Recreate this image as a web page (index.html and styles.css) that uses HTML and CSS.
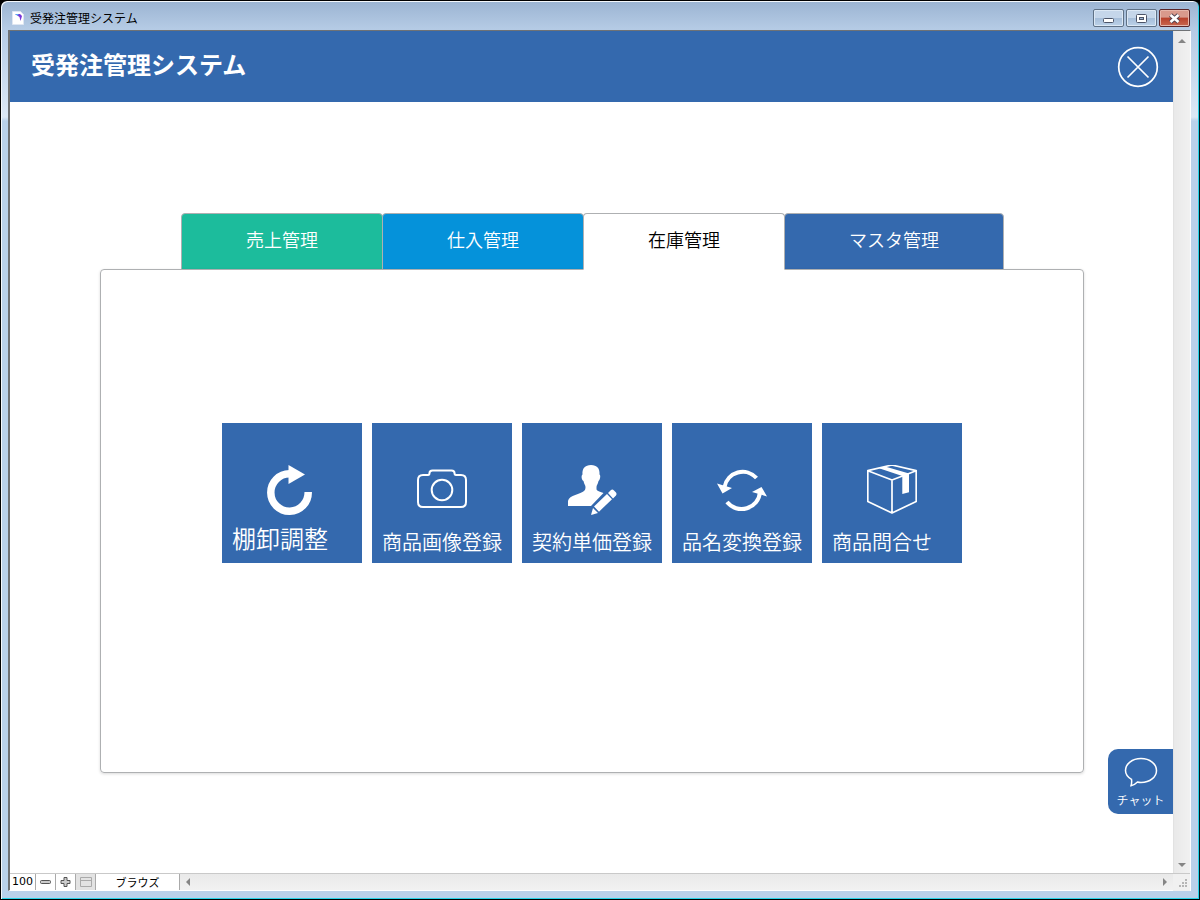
FILE: index.html
```html
<!DOCTYPE html>
<html lang="ja">
<head>
<meta charset="utf-8">
<meta name="viewport" content="width=device-width, initial-scale=1">
<title>受発注管理システム</title>
<link rel="stylesheet" href="styles.css">
</head>
<body>
<div class="window">
  <div class="titlebar">
    <svg class="doc-icon" width="12" height="14" viewBox="0 0 12 14" aria-hidden="true">
      <path d="M.5.5h8l3 3v10H.5z" fill="#fff" stroke="#dfe6f2"/>
      <path d="M3 3h5l2 2-1.500 5-1-4z" fill="#7a35d8"/>
      <path d="M3 3h3.500L6 5z" fill="#5ab0f0"/>
    </svg>
    <span class="window-title">受発注管理システム</span>
    <div class="window-buttons">
      <button class="win-btn" type="button" aria-label="最小化"><svg width="29" height="16" viewBox="0 0 29 16"><rect x="9.500" y="8.500" width="10" height="4" rx="1" fill="#fff" stroke="#4c5468"/></svg></button>
      <button class="win-btn" type="button" aria-label="最大化"><svg width="29" height="16" viewBox="0 0 29 16"><rect x="9.500" y="4.500" width="10" height="8" rx="1" fill="#fff" stroke="#4c5468"/><rect x="12.500" y="7.500" width="4" height="2" fill="#9db6d4" stroke="#4c5468"/></svg></button>
      <button class="win-btn win-btn-close" type="button" aria-label="閉じる"><svg width="29" height="16" viewBox="0 0 29 16"><path d="M10.500 5l8 7M18.500 5l-8 7" stroke="#4f4350" stroke-width="4.500"/><path d="M10.500 5l8 7M18.500 5l-8 7" stroke="#fff" stroke-width="2.700"/></svg></button>
    </div>
  </div>

  <div class="client">
    <div class="view">
      <div class="page">
        <header class="header">
          <h1 class="heading">受発注管理システム</h1>
          <button class="close" type="button" aria-label="終了"><svg width="42" height="42" viewBox="0 0 42 42"><circle cx="21" cy="21" r="19.300"/><path d="M10.500 10.500l21 21M31.500 10.500l-21 21"/></svg></button>
        </header>

        <main class="main">
          <div class="tabs" role="tablist">
            <button class="tab tab-sales" type="button" role="tab">売上管理</button>
            <button class="tab tab-purchase" type="button" role="tab">仕入管理</button>
            <button class="tab tab-stock" type="button" role="tab" aria-selected="true">在庫管理</button>
            <button class="tab tab-master" type="button" role="tab">マスタ管理</button>
          </div>
          <section class="panel">
            <button class="tile tile-large" type="button">
              <svg class="tile-icon" viewBox="0 0 50 50"><path d="M22.500 8.850A18.700 18.700 0 1 0 41.200 27" fill="none" stroke="#fff" stroke-width="7.500"/><path d="M21.500 0l16.500 9.500-16.500 9.500z" fill="#fff"/></svg>
              <span>棚卸調整</span>
            </button>
            <button class="tile" type="button">
              <svg class="tile-icon" viewBox="0 0 50 50"><g fill="none" stroke="#fff" stroke-width="2"><path d="M6 10h5q1.500 0 1.500-2 0-2.500 3-2.500h19q3 0 3 2.500 0 2 1.500 2h5q5 0 5 5v22q0 5-5 5H6q-5 0-5-5V15q0-5 5-5z"/><circle cx="25" cy="25" r="10.300"/></g></svg>
              <span>商品画像登録</span>
            </button>
            <button class="tile" type="button">
              <svg class="tile-icon" viewBox="0 0 50 50"><g fill="#fff"><path d="M24 0c6 0 9 3.500 8.500 9.500 1.500.5.500 6-1 6.500-.5 3-2 4-2 6v2.500c1 2 4 2.200 7 3.500L24 41H1v-5c1-6 13-7 16-10 1-1 1.500-2 1.500-4s-1.500-3-2-6c-2-.5-2.500-6-1-6.500C15 3.500 18 0 24 0z"/><path d="M27 41.500l13-12.500 5 5.200-13 12.500zM41 28l3-3q1.500-1 3 .5l2 2q1 1.500 0 3l-3 3zM26 43l5 5-7 2z"/></g></svg>
              <span>契約単価登録</span>
            </button>
            <button class="tile" type="button">
              <svg class="tile-icon" viewBox="0 0 50 50"><g fill="none" stroke="#fff" stroke-width="4"><path d="M7.500 22A18.500 18.500 0 0 1 39.500 13"/><path d="M43 27A18.500 18.500 0 0 1 10 37"/></g><path d="M0 18.500l15 4.500-9.500 5.500zM50 31.500l-15-4.500L44.500 22z" fill="#fff"/></svg>
              <span>品名変換登録</span>
            </button>
            <button class="tile" type="button">
              <svg class="tile-icon" viewBox="0 0 50 50"><path d="M.8 5.700L24.800 0l24.400 5.700v30.800L25 48 .8 36.500zM.8 5.700L25 15l24.200-9.300M25 15v33" fill="none" stroke="#fff" stroke-width="1.700" stroke-linejoin="round"/><path d="M12 3.200l6-1.700 24 7v18.700l-6.700 1.800V11z" fill="#fff"/></svg>
              <span>商品問合せ</span>
            </button>
          </section>
        </main>

        <button class="chat" type="button">
          <svg width="34" height="32" viewBox="0 0 34 32"><path d="M7.500 22.300C3.500 20 1.500 17 1.500 13.500 1.500 7 8 1.500 17 1.500s15.500 5.500 15.500 12-6.500 12-15.500 12q-2 0-3.500-.5c-2 2-4 3.500-6.500 3.700q1-3 .5-6.400z" fill="none" stroke="#fff" stroke-width="1.500"/></svg>
          <span>チャット</span>
        </button>
      </div>

      <div class="vscroll" aria-hidden="true">
        <svg width="16" height="16" viewBox="0 0 16 16"><path d="M8 6l4 4H4z" fill="#858585"/></svg>
        <svg width="16" height="16" viewBox="0 0 16 16"><path d="M4 8h8l-4 4z" fill="#858585"/></svg>
      </div>
    </div>

    <footer class="status">
      <span class="zoom">100</span>
      <button class="status-btn" type="button" aria-label="縮小"><svg width="19" height="16" viewBox="0 0 19 16"><rect x="4.500" y="6.500" width="10" height="3" rx="1" fill="#ccc" stroke="#555"/></svg></button>
      <button class="status-btn" type="button" aria-label="拡大"><svg width="19" height="16" viewBox="0 0 19 16"><path d="M8 3.500h3v3h3v3h-3v3H8v-3H5v-3h3z" fill="#ccc" stroke="#555"/></svg></button>
      <button class="status-btn status-btn-off" type="button" aria-label="ツールバー"><svg width="19" height="16" viewBox="0 0 19 16"><path d="M4.500 3.500h11v9h-11zM4.500 6.500h11" fill="none" stroke="#aaa"/></svg></button>
      <button class="mode" type="button">ブラウズ</button>
      <div class="hscroll" aria-hidden="true">
        <svg width="16" height="16" viewBox="0 0 16 16"><path d="M6 8l4-4v8z" fill="#858585"/></svg>
        <svg width="16" height="16" viewBox="0 0 16 16"><path d="M6 4l4 4-4 4z" fill="#858585"/></svg>
      </div>
      <svg class="grip" width="17" height="17" viewBox="0 0 17 17" aria-hidden="true"><path d="M12 6h2M9 9h2M12 9h2M6 12h2M9 12h2M12 12h2" stroke="#b5b5b5" stroke-width="2"/></svg>
    </footer>
  </div>
</div>
</body>
</html>
```

FILE: styles.css
```css
* {
  box-sizing: border-box;
}

body {
  margin: 0;
  background: #000;
  font-family: "Noto Sans CJK JP", "Noto Sans", sans-serif;
}

button {
  margin: 0;
  padding: 0;
  border: 0;
  background: none;
  color: inherit;
  font: inherit;
}

svg {
  display: block;
}

/* Window frame */
.window {
  display: flex;
  flex-direction: column;
  min-height: 100vh;
  padding: 2px 7px 8px 6px;
  border: 1px solid #000;
  border-right-color: #02161c;
  border-radius: 7px 7px 0 0;
  background: linear-gradient(#9bb4d2, #b5cbe5 28px, #dce8f5 116px, #b9d1ea 120px);
  box-shadow: inset 1px 1px 0 #f4f8fc, inset -1px -1px 0 #27d3e8;
}

.titlebar {
  display: flex;
  align-items: center;
  height: 27px;
  padding: 3px 2px 0 5px;
}

.window-title {
  margin-left: 6px;
  font-size: 12px;
  line-height: 16px;
  color: #000;
}

.window-buttons {
  display: flex;
  gap: 2px;
  margin-left: auto;
}

.win-btn {
  width: 31px;
  height: 18px;
  border: 1px solid #5f7186;
  border-radius: 2px;
  background: linear-gradient(#c5d6ea 50%, #a5bdd9 50%, #bcd2e9);
  box-shadow: inset 0 0 0 1px #dce8f5;
}

.win-btn-close {
  border-color: #5a2528;
  background: linear-gradient(#d99a8c 45%, #b8412b 50%, #c8674f);
  box-shadow: inset 0 0 0 1px #e6b6aa;
}

.client {
  display: flex;
  flex: 1;
  flex-direction: column;
  margin: 0 1px;
  border: 1px solid #6f7275;
  border-left-width: 2px;
  border-right-color: #fff;
  border-bottom-color: #fff;
  background: #fff;
}

.view {
  display: flex;
  flex: 1;
}

.page {
  position: relative;
  display: flex;
  flex: 1;
  flex-direction: column;
}

/* Header */
.header {
  display: flex;
  justify-content: space-between;
  align-items: center;
  height: 71px;
  padding: 0 14px 0 21px;
  background: #3469ae;
  color: #fff;
}

.heading {
  margin: 0 0 6px;
  font-size: 24px;
  font-weight: 700;
  line-height: 32px;
}

.close svg {
  fill: none;
  stroke: #fff;
  stroke-width: 1.7;
}

/* Tabs and panel */
.main {
  display: flex;
  flex: 1;
  flex-direction: column;
  padding: 111px 89px 100px 90px;
}

.tabs {
  display: flex;
  margin-bottom: -1px;
  padding-left: 81px;
}

.tab {
  width: 202px;
  height: 57px;
  margin-right: -1px;
  padding-bottom: 6px;
  border: 1px solid #aeb0b2;
  border-radius: 4px 4px 0 0;
  color: #fff;
  font-size: 18px;
  font-weight: 350;
  line-height: 24px;
}

.tab-sales {
  background: #1cbc9c;
}

.tab-purchase {
  background: #0592da;
}

.tab-stock {
  border-bottom-color: #fff;
  background: #fff;
  color: #000;
  z-index: 1;
}

.tab-master {
  width: 220px;
  background: #3469ae;
}

.panel {
  display: flex;
  flex: 1;
  flex-wrap: wrap;
  justify-content: center;
  align-content: center;
  gap: 10px;
  padding-bottom: 56px;
  border: 1px solid #aeb0b2;
  border-radius: 4px;
  box-shadow: 0 1px 3px #00000026;
}

.tile {
  display: flex;
  flex-direction: column;
  align-items: flex-start;
  justify-content: space-between;
  width: 140px;
  height: 140px;
  padding: 42px 10px 8px;
  background: #3469ae;
  color: #fff;
  font-size: 20px;
  font-weight: 350;
  line-height: 26px;
  white-space: nowrap;
}

.tile-large {
  padding-bottom: 12px;
  font-size: 24px;
}

.tile-icon {
  align-self: center;
  width: 50px;
  height: 50px;
  flex: none;
}

/* Chat launcher, floating over the page's right edge */
.chat {
  position: absolute;
  right: 0;
  bottom: 59px;
  display: flex;
  flex-direction: column;
  align-items: center;
  gap: 3px;
  width: 65px;
  height: 65px;
  padding-top: 8px;
  border-radius: 10px 0 0 10px;
  background: #3469ae;
  color: #fff;
  font-size: 12px;
  font-weight: 350;
  line-height: 16px;
}

/* Scroll bars and status bar */
.vscroll {
  display: flex;
  flex-direction: column;
  justify-content: space-between;
  width: 17px;
  padding: 2px 0;
  border-left: 1px solid #e2e2e2;
  background: linear-gradient(90deg, #e9e9e9, #f1f1f1);
}

.status {
  display: flex;
  height: 17px;
  border-top: 1px solid #c9c9c9;
  font-size: 11px;
  line-height: 16px;
  color: #000;
}

.zoom {
  width: 26px;
  border-right: 1px solid #aaa;
  font-family: "DejaVu Sans", sans-serif;
  text-align: center;
}

.status-btn {
  width: 20px;
  border-right: 1px solid #aaa;
}

.status-btn-off {
  background: #e3e3e3;
}

.mode {
  width: 84px;
  border-right: 1px solid #aaa;
}

.hscroll {
  display: flex;
  flex: 1;
  justify-content: space-between;
  background: linear-gradient(#e9e9e9, #f1f1f1);
}

.grip {
  background: #f0f0f0;
}
```
